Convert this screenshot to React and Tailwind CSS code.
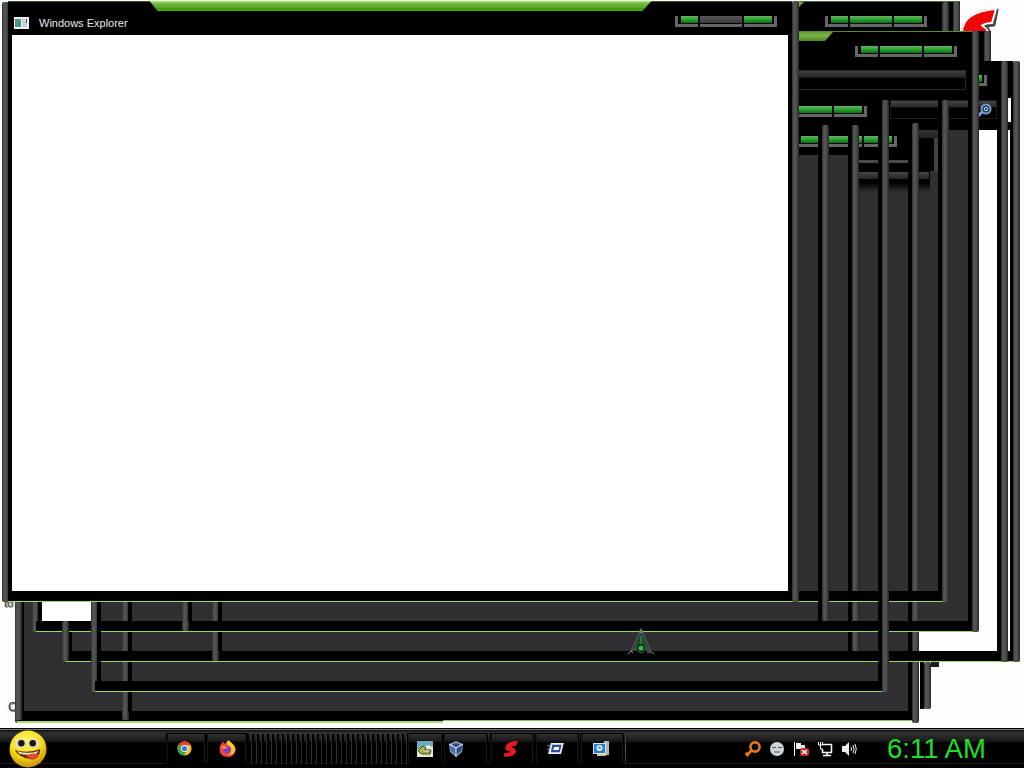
import React from "react";

const railFill =
  "bg-[linear-gradient(90deg,#2e2e2e,#575757_30%,#4c4c4c_65%,#242424)]";
const green = "bg-[linear-gradient(180deg,#6fae6f,#25a52d_50%,#0f6c16)]";
const gray = "bg-[linear-gradient(180deg,#565656,#3c3c3c)]";

const Rail = ({ className = "" }) => (
  <div className={`w-[7px] shrink-0 rounded-[2px] ${railFill} ${className}`} />
);

// minimize / maximize / close strip
const Controls = ({ mid = green, className = "" }) => (
  <div
    className={`flex h-[11px] w-[102px] shrink-0 flex-col justify-between ${className}`}
  >
    <div className="flex h-2 border-x-[3px] border-[#666] pl-[3px]">
      <div className={`h-[7px] w-[17px] ${green}`} />
      <div className={`mx-[2px] h-[7px] w-[42px] ${mid}`} />
      <div className={`h-[7px] w-[28px] ${green}`} />
    </div>
    <div className="flex h-[3px] gap-[2px]">
      <div className="w-[23px] bg-[#666]" />
      <div className="w-[42px] bg-[#666]" />
      <div className="flex-1 bg-[#666]" />
    </div>
  </div>
);

// skinned window border: two rails, optional title area and bottom bar
const Frame = ({
  className,
  head,
  children,
  bar = true,
  leftRail = "",
  rightRail = "",
  body = "border-x-4",
}) => (
  <div className={`absolute flex ${className}`}>
    <Rail className={`-mr-px ${leftRail}`} />
    <div className="flex min-w-0 flex-1 flex-col">
      {head}
      <div className={`flex min-h-0 flex-1 border-black ${body}`}>
        {children}
      </div>
      {bar && (
        <div className="-mr-[3px] ml-[-2px] h-[11px] shrink-0 border-b border-[#93de50] bg-black" />
      )}
    </div>
    <Rail className={rightRail} />
  </div>
);

const SLogo = () => (
  <svg
    viewBox="0 0 40 32"
    className="absolute left-[961px] top-[6px] h-[32px] w-[40px]"
  >
    <path
      d="M36 4C22 4 11 8 5 16C1 21 1 27 3 34H28C30 25 27 22 24 20L33 19Z"
      fill="#454545"
      stroke="#454545"
      strokeWidth="3"
      strokeLinejoin="round"
    />
    <path
      d="M35 3C21 4 10 7 4 16C1 21 0 27 2 34H27C29 25 25 22 21 19.500C24 17.500 28 17 31 17Z"
      fill="#ec0606"
      stroke="#fff"
      strokeWidth="2"
    />
  </svg>
);

const KeySearch = () => (
  <svg viewBox="0 0 16 16" className="size-4" fill="none">
    <path d="M1 15L6 10" stroke="#7da2e0" strokeWidth="3" />
    <circle cx="9" cy="8" r="4.6" fill="#25405f" stroke="#7898d0" strokeWidth="2" />
    <circle cx="9" cy="8" r="1.7" stroke="#b8d4f0" />
  </svg>
);

const DesktopLabel = ({ className, children }) => (
  <span
    className={`absolute leading-[13px] text-[#333] [text-shadow:1px_1px_1px_#777] ${className}`}
  >
    {children}
  </span>
);

// overlapping client areas seen to the right of the front window
const ClientStack = () => (
  <div className="absolute left-[799px] top-[100px] flex h-[521px] w-[198px] flex-col">
    <div className="flex h-[30px] shrink-0 justify-between bg-black">
      <Controls className="-ml-[34px] mt-[6px]" />
      <div className="flex h-[19px] w-[107px] justify-end border border-[#1c1c1c] bg-[linear-gradient(180deg,#444,#2b2b2b_35%,#000_40%)] pr-[3px]">
        <KeySearch />
      </div>
    </div>
    <div className="flex w-[173px] flex-1 bg-[#303033]">
      <div className="w-[119px]">
        <div className="h-[25px] bg-black pt-[6px]">
          <Controls className="-ml-[4px]" />
        </div>
        <div className="ml-[59px] h-[37px] w-[72px] bg-[linear-gradient(180deg,#000_75%,#303033)] pt-[5px]">
          <div className="h-[3px] w-[50px] bg-[#4a4a4a]" />
          <div className="mt-[9px] h-[7px] w-[71px] bg-[linear-gradient(180deg,#474747,#232323)]" />
        </div>
      </div>
      <div className="flex h-[41px] w-[20px] flex-col">
        <div className="h-2 bg-[linear-gradient(180deg,#333,#232323)]" />
        <div className="flex-1 border-r-4 border-[#424242] bg-black" />
      </div>
    </div>
  </div>
);

const BackWindows = () => (
  <>
    <SLogo />
    <DesktopLabel className="left-[4px] top-[597px] text-[11px]">
      to
    </DesktopLabel>
    <DesktopLabel className="left-[8px] top-[701px] text-[12px]">
      C
    </DesktopLabel>

    <div className="absolute left-[799px] top-px flex h-[32px] w-[161px] border-t border-[#4d6c37] bg-black">
      <div className="size-[5px] bg-[#6cab3d] [clip-path:polygon(0_0,100%_0,0_100%)]" />
      <Controls className="ml-[21px] mt-[14px]" />
      <Rail className="ml-[15px]" />
      <Rail className="ml-auto" />
    </div>
    <div className="absolute left-[978px] top-[31px] flex h-[32px] w-[13px] bg-black pl-[6px]">
      <Rail />
    </div>

    <Frame
      className="left-[62px] top-[61px] h-[601px] w-[958px]"
      leftRail="opacity-0"
      body="border-r-[3px]"
      head={
        <div className="flex h-[69px] shrink-0 flex-col">
          <div className="h-[37px] bg-black pt-[14px]">
            <Controls className="ml-[817px]" />
          </div>
          <div className="flex h-[24px] justify-between">
            <div className="w-[940px] bg-black" />
            <div className="w-[2px] bg-black" />
          </div>
          <div className="flex-1 bg-black" />
        </div>
      }
    />
    <ClientStack />

    <div className="absolute left-[15px] top-[601px] flex h-[122px] w-[904px]">
      <Rail />
      <div className="flex flex-1 flex-col bg-[#303033]">
        <div className="flex-1 border-l-2 border-r-4 border-black" />
        <div className="h-[9px] bg-black" />
        <div className="-mx-[5px] flex h-[3px] items-end bg-black">
          <div className="h-[2px] w-[426px] bg-[#a8df6c]" />
          <div className="h-[3px] flex-1 border-t border-[#8bc653] bg-[#fefefe]" />
        </div>
      </div>
      <Rail />
    </div>

    <Frame
      className="left-[122px] top-[123px] h-[598px] w-[797px]"
      leftRail="mb-px"
      bar={false}
      body="mb-[9px] border-x-4"
    />
    <Frame className="left-[62px] top-[61px] h-[601px] w-[946px]" body="mt-[30px] border-x-4" />
    <Frame
      className="left-[212px] top-[125px] h-[536px] w-[647px]"
      rightRail="mb-[10px]"
      bar={false}
      body="mb-[10px] border-x-4"
    />
    <Frame
      className="left-[32px] top-[31px] h-[601px] w-[947px]"
      head={
        <div className="flex h-[69px] shrink-0 flex-col border-t border-[#5c8a38] bg-black">
          <div className="flex h-[38px] justify-between">
            <div className="h-[9px] w-[795px] bg-[linear-gradient(180deg,#5f9f30,#79b34c_40%,#4b851d)] [clip-path:polygon(0_0,100%_0,787px_100%,0_100%)]" />
            <Controls className="mr-[15px] mt-[14px]" />
          </div>
          <div className="h-[20px] w-[928px] border border-[#2a2a2a] bg-[linear-gradient(180deg,#404040,#262626_35%,#000_40%)]" />
        </div>
      }
    >
      <div className="w-[49px] bg-white" />
    </Frame>
    <Frame className="left-[152px] top-[100px] h-[502px] w-[797px]" />
    <Frame
      className="left-[182px] top-[125px] h-[506px] w-[647px]"
      rightRail="mb-[10px]"
      bar={false}
      body="mb-[10px] border-x-4"
    />
    <Frame className="left-[91px] top-[100px] h-[592px] w-[798px]" />
    {/* lower left corner of the white frame */}
    <div className="absolute left-[62px] top-[621px] flex h-[40px]">
      <Rail />
    </div>

    <div className="absolute left-[920px] top-[662px] flex h-[47px]">
      <div className="w-[4px] bg-black" />
      <Rail />
      <div className="h-[5px] w-[8px] bg-[#1c1c1c]" />
    </div>
  </>
);

const FrontWindow = () => (
  <div className="absolute left-[2px] top-px flex h-[601px] w-[797px]">
    <Rail className="mt-px" />
    <div className="-ml-px flex w-[784px] flex-col border-b border-[#93de50] bg-black pb-[10px]">
      <div className="flex h-[10px] justify-center border-t border-[#35511f] pr-px">
        <div className="-mt-px ml-[2px] h-[10px] w-[502px] bg-[linear-gradient(180deg,#98ee5a_10%,#79b94b_20%,#5da52e_65%,#3a9608_70%,#43b000)] [clip-path:polygon(0_0,100%_0,493px_100%,8px_100%)]" />
      </div>
      <div className="flex h-[24px] items-center px-[6px]">
        <svg viewBox="0 0 15 12" className="h-3 w-[15px]">
          <path fill="#eef2f2" d="M0 0h15v12H0z" />
          <path fill="#4c9387" d="M1 2h6v8H1z" />
          <path fill="#c9d0d5" d="M8 2h5v8H8z" />
          <path fill="#555" d="M12 2h1v4h-1z" />
        </svg>
        <span className="ml-[10px] text-[11px] leading-none text-[#e8e8e8]">
          Windows Explorer
        </span>
        <Controls mid={gray} className="mb-[4px] ml-auto mr-[9px]" />
      </div>
      <div className="mx-1 flex-1 bg-white" />
    </div>
    <Rail />
  </div>
);

const Cursor = () => (
  <svg
    viewBox="0 0 28 30"
    className="absolute left-[627px] top-[627px] h-[30px] w-[28px]"
  >
    <path d="M14 1L4 24L9 22L14 9L19 22L24 24Z" fill="#3c4247" stroke="#596063" strokeWidth=".7" />
    <path d="M14 7L9 19h10Z" fill="#17501e" />
    <path d="M14 9v8" stroke="#3aa447" />
    <path d="M12.500 3h3v3h-3z" fill="#77818a" />
    <circle cx="14" cy="21" r="4.5" fill="#111" stroke="#267b2d" />
    <circle cx="14" cy="21" r="2.6" fill="#28c342" />
    <path d="M1 27l3-3 2 2M20 25h4l3 2" stroke="#889887" fill="none" />
  </svg>
);

const Smiley = () => (
  <svg viewBox="0 0 40 40" className="h-[38px] w-[38px] shrink-0">
    <defs>
      <radialGradient id="face" cx=".45" cy=".3" r=".7">
        <stop offset="0" stopColor="#fff86a" />
        <stop offset=".6" stopColor="#f7dc1b" />
        <stop offset="1" stopColor="#c68d08" />
      </radialGradient>
    </defs>
    <circle cx="20" cy="20" r="19.500" fill="url(#face)" />
    <ellipse cx="12" cy="14" rx="6" ry="5" fill="#dedcc4" />
    <ellipse cx="26" cy="14" rx="6" ry="5" fill="#dedcc4" />
    <circle cx="13" cy="14" r="3.400" fill="#17130b" />
    <circle cx="25" cy="14" r="3.400" fill="#17130b" />
    <path d="M6 21Q20 25 33 20Q32 31 24 31Q10 29 6 21Z" fill="#5e2a0b" />
    <path d="M8 22Q20 26 31 22L29 25Q19 27 11 25Z" fill="#f3e9b8" />
    <path d="M18 27Q25 24 31 25Q30 31 26 31Q21 31 18 27Z" fill="#df4930" />
  </svg>
);

const Chrome = () => (
  <svg viewBox="0 0 16 16" className="size-[15px]">
    <circle cx="8" cy="8" r="7.5" fill="#f6c42a" />
    <path d="M8 8L1.5 4.2A7.5 7.5 0 0 1 14.6 4.5H8Z" fill="#e34335" />
    <path d="M8 8L1.5 4.2A7.5 7.5 0 0 0 7.2 15.5L10.5 10Z" fill="#35a552" />
    <circle cx="8" cy="8" r="3.7" fill="#fff" />
    <circle cx="8" cy="8" r="2.8" fill="#3477e0" />
  </svg>
);

const Firefox = () => (
  <svg viewBox="0 0 16 16" className="size-[17px]">
    <path d="M2 4L3.5 1.5L5 3.5Q7 3 8.5 0Q10 2 12 3.5Q16 6 15.5 10Q14 16 8 16Q1 15.5 .5 9Q.5 6 2 4Z" fill="#f9443d" />
    <path d="M8.500 0Q15 4 15.500 9Q14 15 8 14Q13 12 11 7Q9 5 7 4Q8 2 8.500 0Z" fill="#ffc42e" />
    <circle cx="7.500" cy="9" r="3.500" fill="#7941c4" />
    <path d="M2 6Q5 5 8 7Q6 8 4 8.500Z" fill="#ff972d" />
  </svg>
);

const Paint = () => (
  <svg viewBox="0 0 16 16" className="size-4">
    <path fill="#e5e9cf" d="M0 0h16v16H0z" />
    <path fill="#67aebf" d="M0 0h16v6L11 4L5 7L0 9z" />
    <path d="M1 10L6 5L9 7L7 9L14 9L13 13L5 13Z" fill="#c5c22c" stroke="#2b443c" />
    <path d="M6 9h7v2H5z" fill="#f8f3b6" stroke="#555" strokeWidth=".6" />
  </svg>
);

const Cube = () => (
  <svg viewBox="0 0 16 16" className="size-4">
    <path d="M8 0L15 3L14 11L8 16L2 11L1 3Z" fill="#8197b9" />
    <path d="M8 7L14 4L13 10L8 14Z" fill="#284d82" />
    <path d="M8 7L2 4L3 10L8 14Z" fill="#4d6e9e" />
    <path d="M8 2L12 4L8 6L4 4Z" fill="#30476f" />
    <path d="M1 3L8 7L15 3M8 7v9" stroke="#dce7f5" fill="none" />
  </svg>
);

const RedS = () => (
  <svg viewBox="0 0 40 44" className="h-[16px] w-[16px]">
    <path
      d="M39 1C28 0 14 2 8 10C2 18 3 25 12 27L18 29C14 33 8 32 2 33L0 43C14 44 29 42 33 31C35 23 30 19 22 17C23 13 29 13 34 13Z"
      fill="#e51b20"
    />
  </svg>
);

const RunIcon = () => (
  <svg viewBox="0 0 18 14" className="h-[13px] w-[17px]">
    <path d="M4 1H18L15 13H1Z" fill="#e7edf5" />
    <path d="M5.500 3H15.500L13.500 11H4Z" fill="#274e9f" />
    <path d="M7.500 5.500H13L12.300 8.500H6.500Z" fill="#fff" />
    <path d="M0 4h4M0 8h3" stroke="#8a9fb5" />
  </svg>
);

const Programs = () => (
  <svg viewBox="0 0 17 15" className="h-[15px] w-[17px]">
    <path fill="#aab8bd" d="M11 0h5v14h-7z" />
    <path fill="#d8e3e6" d="M0 2h13v11H0z" />
    <path fill="#2b7fc0" d="M1 3h11v9H1z" />
    <circle cx="6.500" cy="7" r="3" fill="#dcedf5" />
    <path d="M5 7L7 5L8 8Z" fill="#2874b9" />
    <path fill="#d4c99f" d="M4 13h9v2H4z" />
  </svg>
);

const TaskButton = ({ className, children }) => (
  <div
    className={`flex h-[31px] items-center border border-black shadow-[inset_-1px_0_#181818,inset_1px_0_#141414] ${className}`}
  >
    {children}
  </div>
);

const Tray = () => (
  <div className="ml-auto mr-[36px] flex h-full items-center gap-2">
    <svg viewBox="0 0 16 16" className="size-4" fill="none">
      <circle cx="10" cy="6" r="4.600" stroke="#e6781b" strokeWidth="2.600" />
      <path d="M7 9L2 14M.500 12l3 3" stroke="#e6781b" strokeWidth="2.800" />
    </svg>
    <svg viewBox="0 0 16 16" className="size-4">
      <circle cx="8" cy="8" r="7" fill="#cfd4d8" />
      <path d="M3 6.500h4M9 6.500h4M5 11h6" stroke="#555" />
    </svg>
    <svg viewBox="0 0 16 16" className="size-4">
      <path d="M1.500 1v14" stroke="#fff" />
      <path d="M3 2h5v2h4v6H8V8H3Z" fill="#eee" />
      <rect x="7" y="7" width="9" height="8" rx="2" fill="#c22c23" />
      <path d="M9 9l5 4M14 9l-5 4" stroke="#fff" strokeWidth="1.500" />
    </svg>
    <svg viewBox="0 0 16 16" className="size-4" fill="none" stroke="#fff">
      <path d="M6 3.500h8.500v8H5.500V8M10 12v2.500M6 14.500h8" strokeWidth="1.500" />
      <path d="M1.500 1v3h4V1M3.500 1v3M3.500 4v4h2" />
    </svg>
    <svg viewBox="0 0 16 16" className="size-4" fill="none" stroke="#eee">
      <path d="M1 5h3l4-4v14L4 11H1Z" fill="#eee" stroke="none" />
      <path d="M10 6q1 2 0 4M12 4q2 4 0 8M14 3q2.500 5 0 10" />
    </svg>
    <span className="ml-[22px] w-[101px] whitespace-nowrap text-[27.5px] leading-[40px] text-[#20df27]">
      6:11 AM
    </span>
  </div>
);

const Taskbar = () => (
  <div className="h-10 border-t border-black bg-[linear-gradient(180deg,#767676_0,#767676_1px,#111_1px,#323232_4px,#1a1a1a_12px,#000_14px,#000_34px,#1b1b1b_34px,#1b1b1b_35px,#000_35px)]">
    <div className="flex h-[39px] items-center">
      <div className="ml-[9px] mr-[119px] flex pt-px">
        <Smiley />
      </div>
      <TaskButton className="w-[40px] justify-center pr-[3px]">
        <Chrome />
      </TaskButton>
      <TaskButton className="w-[41px] justify-center pl-px">
        <Firefox />
      </TaskButton>
      <div className="h-[30px] w-[160px] bg-[repeating-linear-gradient(90deg,#000_0,#000_2px,transparent_2px,transparent_4px,#2c2c2c_4px,#2c2c2c_5px)]" />
      <TaskButton className="w-[36px] justify-center">
        <Paint />
      </TaskButton>
      <TaskButton className="w-[45px] pl-1">
        <Cube />
      </TaskButton>
      <TaskButton className="ml-[2px] w-[44px] justify-center pr-[2px]">
        <RedS />
      </TaskButton>
      <TaskButton className="ml-px w-[44px] justify-center pr-[3px]">
        <RunIcon />
      </TaskButton>
      <TaskButton className="ml-px w-[44px] justify-center pr-[2px]">
        <Programs />
      </TaskButton>
      <div className="ml-px h-[30px] w-px bg-[linear-gradient(180deg,#173512,#397825_50%,#173512)]" />
      <Tray />
    </div>
  </div>
);

const App = () => {
  return (
    <div className="flex h-[768px] w-[1024px] flex-col overflow-hidden bg-[#fefefe] font-['Liberation_Sans',Arial,sans-serif]">
      <div className="relative flex-1 overflow-hidden">
        <BackWindows />
        <FrontWindow />
        <Cursor />
      </div>
      <Taskbar />
    </div>
  );
};

export default App;
